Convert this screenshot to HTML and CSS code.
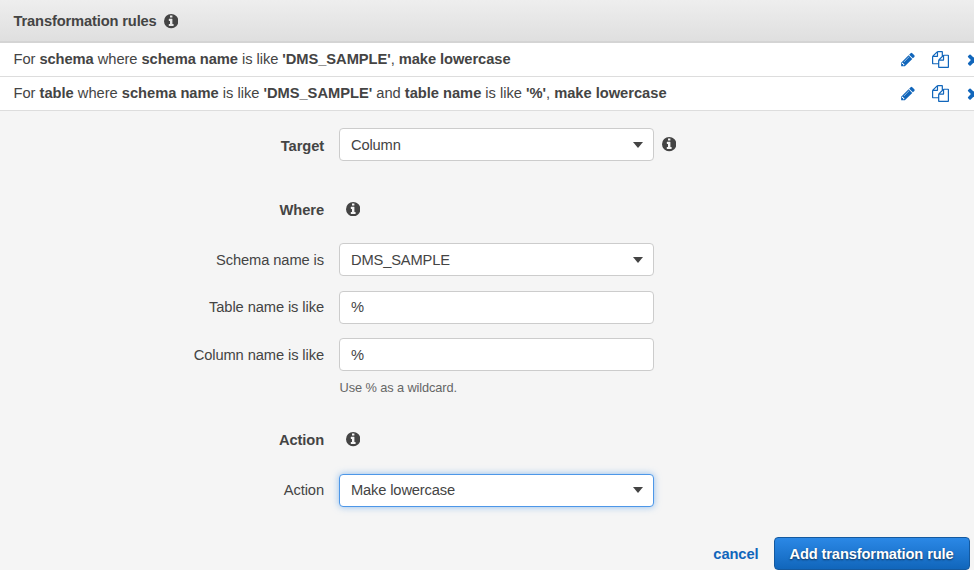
FILE: index.html
```html
<!DOCTYPE html>
<html lang="en">
<head>
<meta charset="utf-8">
<title>Transformation rules</title>
<link rel="stylesheet" href="styles.css">
</head>
<body>
<svg class="sprite" aria-hidden="true">
  <symbol id="info" viewBox="128 128 1536 1536"><path fill-rule="evenodd" d="M1152 1376v-160q0-14-9-23t-23-9h-96v-512q0-14-9-23t-23-9h-320q-14 0-23 9t-9 23v160q0 14 9 23t23 9h96v320h-96q-14 0-23 9t-9 23v160q0 14 9 23t23 9h448q14 0 23-9t9-23zM1024 480v-160q0-14-9-23t-23-9h-192q-14 0-23 9t-9 23v160q0 14 9 23t23 9h192q14 0 23-9t9-23zM1664 896a768 768 0 1 1-1536 0a768 768 0 1 1 1536 0z"/></symbol>
  <symbol id="pencil" viewBox="0 0 1792 1792"><path d="M450 1536l60-60-235-235-60 60v107h128v128h107zm564-928q0-22-22-22-10 0-17 7l-542 542q-7 7-7 17 0 22 22 22 10 0 17-7l542-542q7-7 7-17zm-54-192l416 416-832 832h-416v-416zm683 96q0 53-37 90l-166 166-416-416 166-165q36-38 90-38 53 0 91 38l235 234q37 39 37 91z"/></symbol>
  <symbol id="copy" viewBox="0 0 1792 1792"><path d="M1696 384q40 0 68 28t28 68v1216q0 40-28 68t-68 28h-960q-40 0-68-28t-28-68v-288h-544q-40 0-68-28t-28-68v-672q0-40 20-88t48-76l408-408q28-28 76-48t88-20h416q40 0 68 28t28 68v328q68-40 128-40h416zm-544 213l-299 299h299v-299zm-640-384l-299 299h299v-299zm196 647l316-316v-416h-384v416q0 40-28 68t-68 28h-416v640h512v-256q0-40 20-88t48-76zm956 804v-1152h-384v416q0 40-28 68t-68 28h-416v640h896z"/></symbol>
  <symbol id="times" viewBox="0 0 1792 1792"><path d="M1490 1322q0 40-28 68l-136 136q-28 28-68 28t-68-28l-294-294-294 294q-28 28-68 28t-68-28l-136-136q-28-28-28-68t28-68l294-294-294-294q-28-28-28-68t28-68l136-136q28-28 68-28t68 28l294 294 294-294q28-28 68-28t68 28l136 136q28 28 28 68t-28 68l-294 294 294 294q28 28 28 68z"/></symbol>
</svg>
<header class="panel-header">
  <h1>Transformation rules</h1>
  <svg class="info"><use href="#info"/></svg>
</header>
<ul class="rules">
  <li class="rule">
    <span class="rule-text">For <b>schema</b> where <b>schema name</b> is like <b>'DMS_SAMPLE'</b>, <b>make lowercase</b></span>
    <span class="rule-tools"><svg class="tool tool-edit"><use href="#pencil"/></svg><svg class="tool"><use href="#copy"/></svg><svg class="tool"><use href="#times"/></svg></span>
  </li>
  <li class="rule">
    <span class="rule-text">For <b>table</b> where <b>schema name</b> is like <b>'DMS_SAMPLE'</b> and <b>table name</b> is like <b>'%'</b>, <b>make lowercase</b></span>
    <span class="rule-tools"><svg class="tool tool-edit"><use href="#pencil"/></svg><svg class="tool"><use href="#copy"/></svg><svg class="tool"><use href="#times"/></svg></span>
  </li>
</ul>
<main class="form">
  <div class="row row-target">
    <span class="label strong">Target</span>
    <div class="field"><span>Column</span><i class="caret"></i></div>
    <svg class="info"><use href="#info"/></svg>
  </div>
  <div class="row row-heading">
    <span class="label strong">Where</span>
    <svg class="info"><use href="#info"/></svg>
  </div>
  <div class="row">
    <span class="label">Schema name is</span>
    <div class="field"><span>DMS_SAMPLE</span><i class="caret"></i></div>
  </div>
  <div class="row">
    <span class="label">Table name is like</span>
    <div class="field"><span>%</span></div>
  </div>
  <div class="row row-last">
    <span class="label">Column name is like</span>
    <div class="field"><span>%</span></div>
  </div>
  <p class="hint">Use % as a wildcard.</p>
  <div class="row row-heading">
    <span class="label strong">Action</span>
    <svg class="info"><use href="#info"/></svg>
  </div>
  <div class="row">
    <span class="label">Action</span>
    <div class="field focused"><span>Make lowercase</span><i class="caret"></i></div>
  </div>
  <footer class="actions">
    <a class="cancel">cancel</a>
    <button class="submit" type="button">Add transformation rule</button>
  </footer>
</main>
</body>
</html>
```
FILE: styles.css
```css
* {
  box-sizing: border-box;
}

body {
  margin: 0;
  height: 570px;
  overflow: hidden;
  background: #f5f5f5;
  color: #444;
  font: 14.7px/20px "Liberation Sans", Arial, sans-serif;
  letter-spacing: -0.1px;
}

svg {
  display: block;
  flex: none;
  fill: currentColor;
}

.sprite {
  position: absolute;
  width: 0;
  height: 0;
}

.panel-header {
  display: flex;
  align-items: center;
  gap: 7px;
  height: 43px;
  padding: 2px 13.5px 0;
  background: linear-gradient(#eee, #dfdfdf);
  border-bottom: 2px solid #d4d4d4;
}

.panel-header h1 {
  margin: 0;
  padding-bottom: 1px;
  font-size: 14.7px;
  line-height: 19px;
  letter-spacing: -0.15px;
}

.info {
  width: 14.4px;
  height: 14.4px;
}

.rules {
  margin: 0;
  padding: 0;
  list-style: none;
}

.rule {
  display: flex;
  align-items: center;
  justify-content: space-between;
  height: 34px;
  padding: 0 0 1px 13.5px;
  background: #fff;
  border-bottom: 1px solid #ddd;
  letter-spacing: -0.02px;
  white-space: nowrap;
}

.rule:first-child {
  letter-spacing: -0.06px;
}

.rule-tools {
  display: flex;
  gap: 16px;
  margin-right: -8px;
  color: #1166bb;
}

.tool {
  width: 17px;
  height: 17px;
}

.tool-edit {
  width: 16px;
}

.form {
  padding-top: 17px;
}

.row {
  display: flex;
  align-items: center;
  height: 33px;
  margin-bottom: 14.5px;
}

.label {
  width: 324px;
  margin-right: 15px;
  text-align: right;
}

.strong {
  font-weight: bold;
}

.row-target .label {
  padding-top: 2px;
}

.field {
  display: flex;
  align-items: center;
  justify-content: space-between;
  width: 315px;
  height: 33px;
  padding: 0 10px 0 11px;
  background: #fff;
  border: 1px solid #ccc;
  border-radius: 4px;
  letter-spacing: -0.15px;
}

.field + .info {
  margin-left: 7.5px;
}

.caret {
  border: 5.5px solid transparent;
  border-top: 6px solid #444;
  border-bottom: 0;
}

.focused {
  border-color: #4d97e8;
  box-shadow: 0 0 7px rgba(77, 151, 232, .6);
}

.row-target {
  margin-bottom: 32px;
}

.row-heading {
  margin-bottom: 17px;
}

.row-heading .info {
  margin: 0 0 1px 7px;
}

.row-last {
  margin-bottom: 6.5px;
}

.hint {
  margin: 0 0 26px 339.5px;
  color: #666;
  font-size: 12.8px;
  line-height: 20px;
}

.actions {
  display: flex;
  align-items: center;
  justify-content: flex-end;
  gap: 15px;
  margin-top: 30.5px;
  padding-right: 4.5px;
}

.cancel {
  color: #1166bb;
  font-weight: bold;
}

.submit {
  width: 196px;
  height: 33px;
  padding: 0;
  border: 1px solid #14599f;
  border-radius: 4px;
  background: linear-gradient(#2b88e6, #1166bb);
  color: #fff;
  font: bold 14.7px/20px "Liberation Sans", Arial, sans-serif;
  letter-spacing: -0.14px;
  text-shadow: 0 1px 2px rgba(0, 0, 0, .6);
  white-space: nowrap;
}
```
